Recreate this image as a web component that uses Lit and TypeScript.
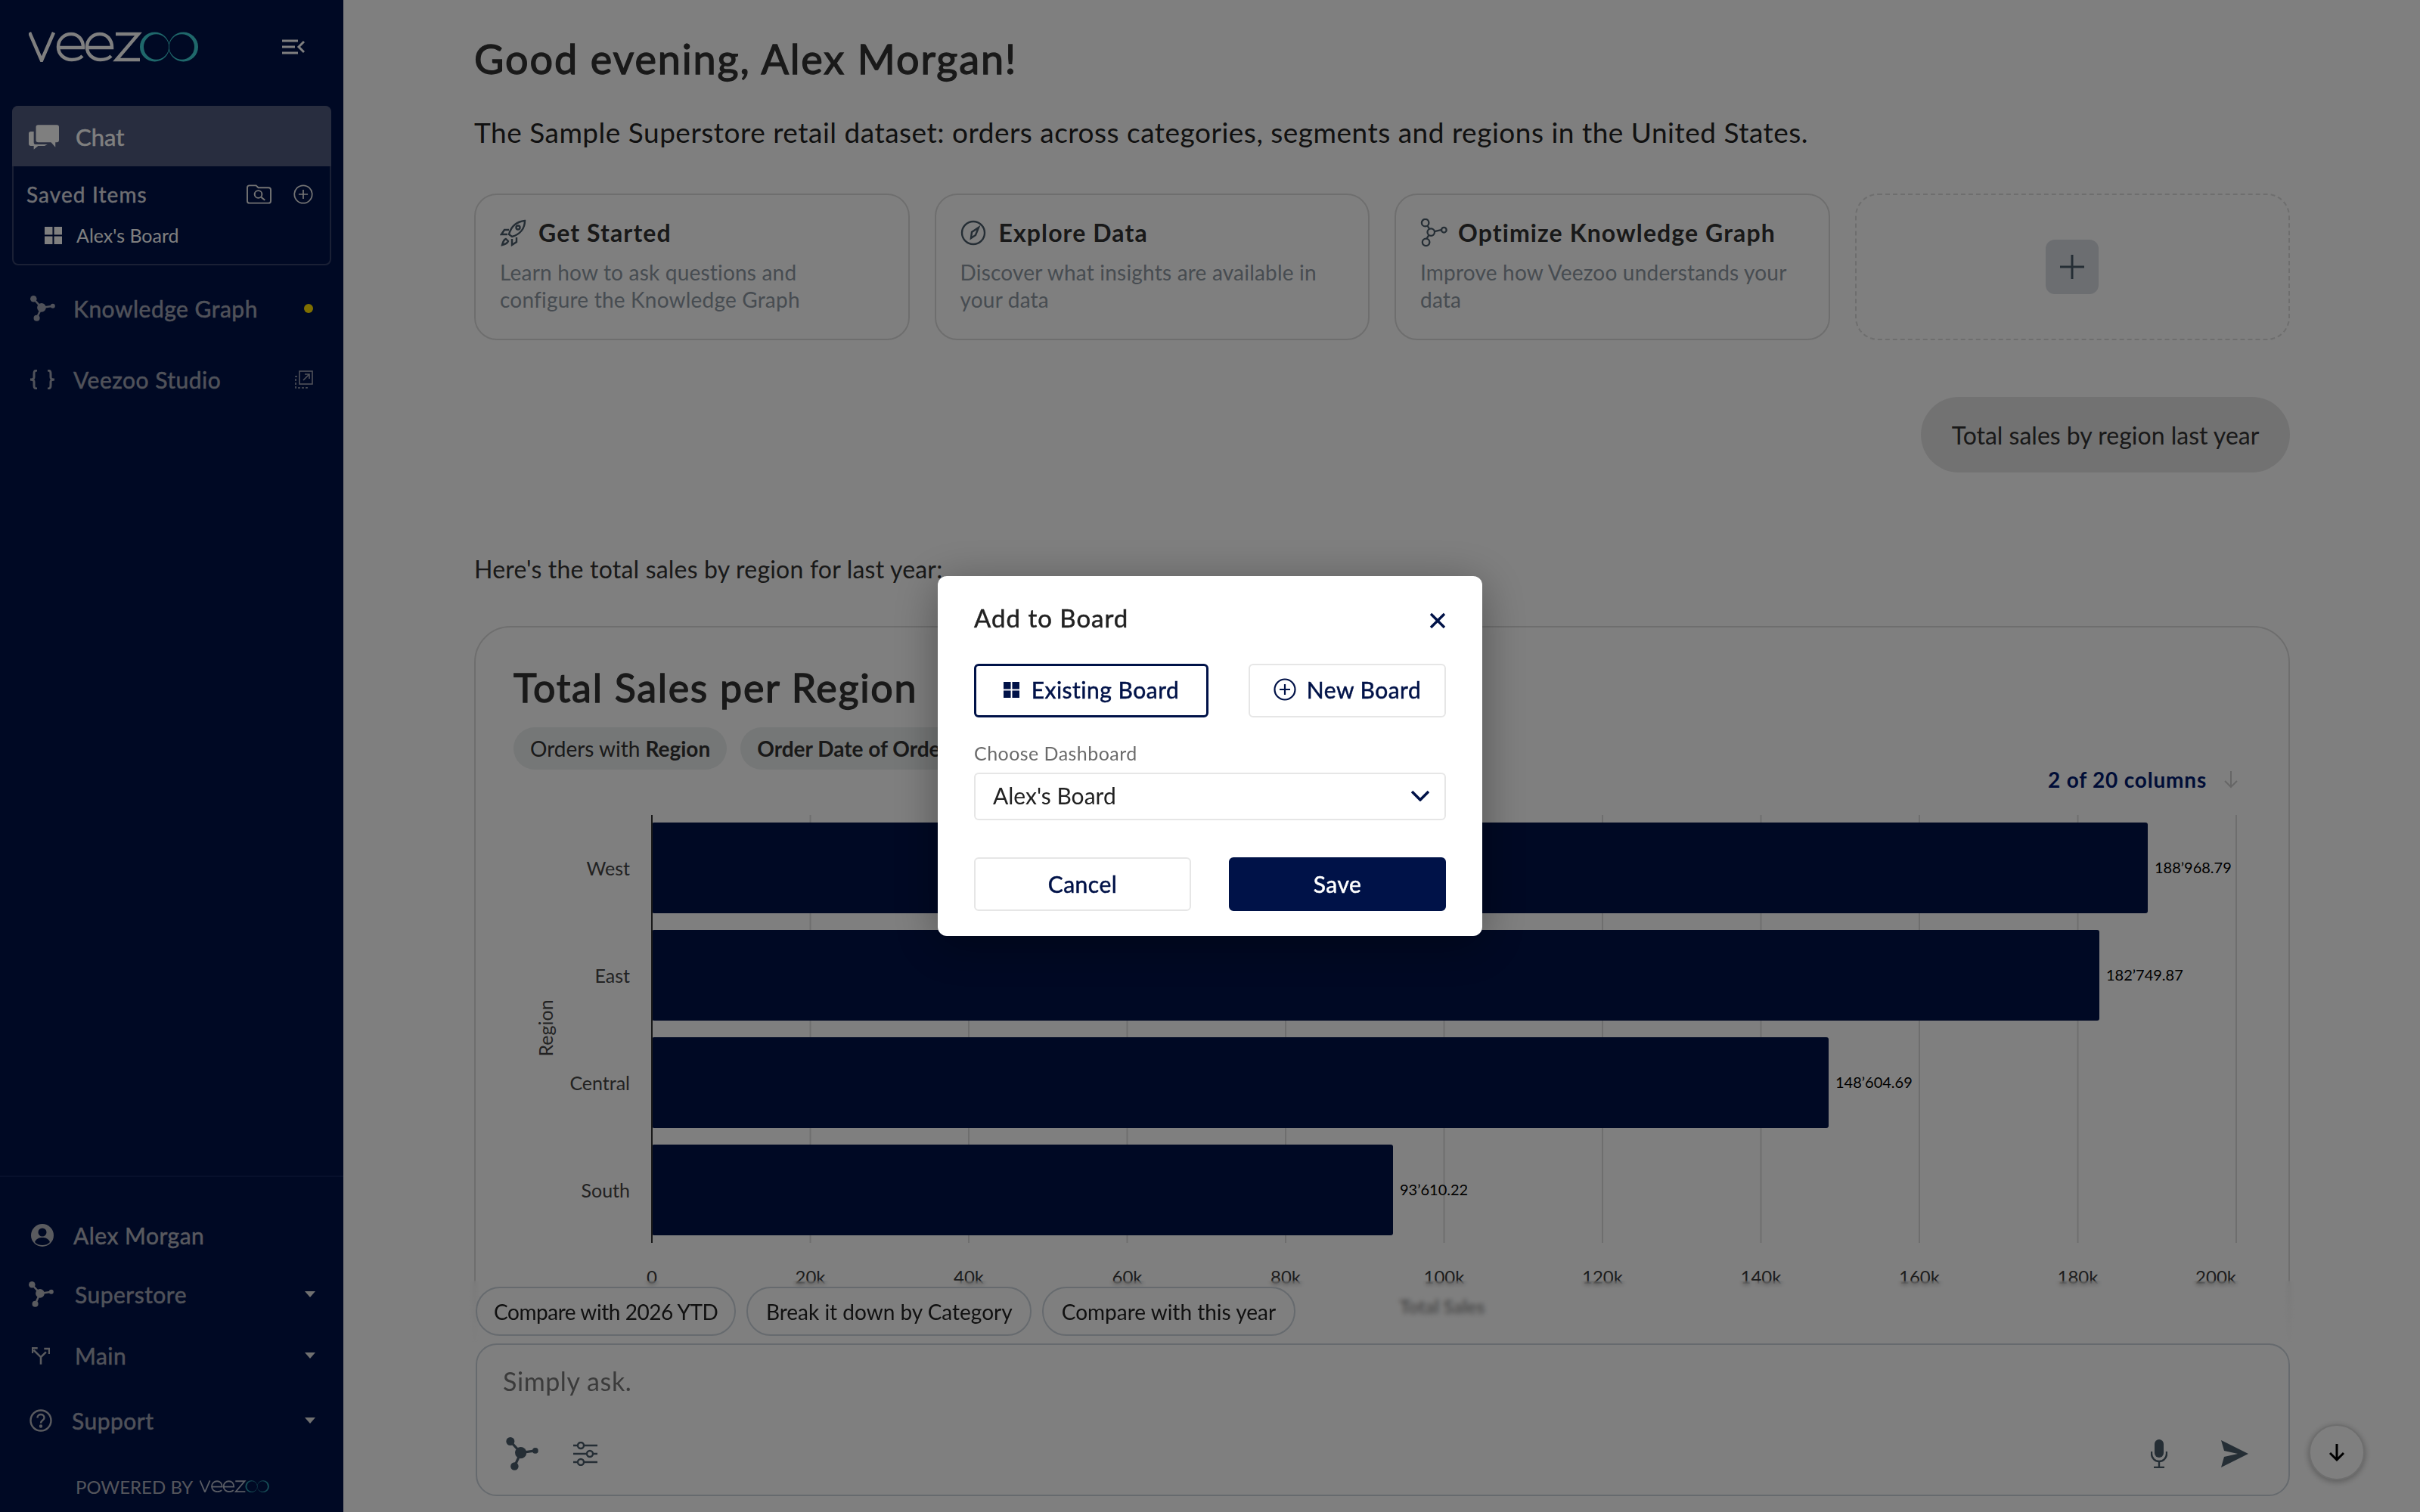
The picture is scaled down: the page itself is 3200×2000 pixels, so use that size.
import { LitElement, html, css, svg } from "lit";
import { customElement } from "lit/decorators.js";

const graphIcon = (s: number, c: string) => html`<svg width=${s} height=${s} viewBox="0 0 32 32" fill=${c} stroke=${c}>
  <line x1="5" y1="4" x2="15" y2="15" stroke-width="2.4"/><line x1="15" y1="15" x2="29" y2="13" stroke-width="2.4"/><line x1="15" y1="15" x2="9" y2="28" stroke-width="2.4"/>
  <circle cx="5" cy="4" r="4" stroke="none"/><circle cx="15" cy="15" r="5.5" stroke="none"/><circle cx="29" cy="13" r="2.8" stroke="none"/><circle cx="9" cy="28" r="3.8" stroke="none"/></svg>`;
const gridIcon = (s: number, c: string) => html`<svg width=${s} height=${s} viewBox="0 0 22 22" fill=${c}><rect x="0" y="0" width="10" height="10"/><rect x="12" y="0" width="10" height="10"/><rect x="0" y="12" width="10" height="10"/><rect x="12" y="12" width="10" height="10"/></svg>`;
const plusCircle = (s: number, c: string, w = 2) => html`<svg width=${s} height=${s} viewBox="0 0 30 30" fill="none" stroke=${c} stroke-width=${w}><circle cx="15" cy="15" r="13.5"/><path d="M15 8v14M8 15h14"/></svg>`;
const caret = html`<svg class="caret" width="14" height="8" viewBox="0 0 14 8" fill="#e0e0e0"><path d="M0 0h14L7 8z"/></svg>`;
const ring = (cx: number, icx: number) => `M${cx - 19.5} 20a19.500 19.500 0 1 0 39 0a19.500 19.500 0 1 0 -39 0zM${icx - 16.6} 20a16.600 16.700 0 1 0 33.200 0a16.600 16.700 0 1 0 -33.200 0z`;
const logo = (w: number, teal: string, mini = false) => html`<svg class=${mini ? "mini" : ""} width=${w} viewBox="0 0 224 40" fill="none">
  <g stroke="#fff" stroke-width="4.5"><path d="M1 1l16 37L33 1"/><path d="M39 21h33c0-11-7-18-16-18s-17 7-17 17 8 17 18 17c6 0 11-2 14-5"/><path d="M77 21h33c0-11-7-18-16-18s-17 7-17 17 8 17 18 17c6 0 11-2 14-5"/><path d="M115 3h30l-29 34h31"/></g>
  <path fill=${teal} fill-rule="evenodd" d=${ring(166.5, 168.6)}/><path fill=${teal} fill-rule="evenodd" d=${ring(204.5, 202.4)}/></svg>`;

const data = [
  { n: "West", v: "188’968.79", w: 1978 },
  { n: "East", v: "182’749.87", w: 1914 },
  { n: "Central", v: "148’604.69", w: 1556 },
  { n: "South", v: "93’610.22", w: 980 },
];
const ticks = ["0", "20k", "40k", "60k", "80k", "100k", "120k", "140k", "160k", "180k", "200k"];

@customElement("chart-view")
class ChartView extends LitElement {
  static styles = css`
    :host { display: block; }
    svg { display: block; font-family: Lato, sans-serif; }
    .cat { font-size: 25px; fill: #444; }
    .val { font-size: 20px; fill: #000; }
    .tick { font-size: 24px; fill: #3a3a3a; }
    .ttl { font-size: 24px; fill: #555; font-weight: 700; }
  `;
  render() {
    const x0 = 183, step = 209.5;
    return html`<svg width="2300" height="700" viewBox="0 0 2300 700">
      ${ticks.map((_, i) => svg`<line x1=${x0 + i * step} x2=${x0 + i * step} y1="0" y2="566" stroke="#ddd" stroke-width="2"/>`)}
      ${data.map((d, i) => svg`
        <rect x=${x0} y=${10 + i * 142} width=${d.w} height="120" rx="3" fill="#001248"/>
        <text class="cat" x="154" y=${80 + i * 142} text-anchor="end">${d.n}</text>
        <text class="val" x=${x0 + d.w + 9} y=${77 + i * 142}>${d.v}</text>`)}
      <line x1=${x0} x2=${x0} y1="0" y2="566" stroke="#333" stroke-width="2"/>
      ${ticks.map((t, i) => svg`<text class="tick" x=${x0 + i * step} y="620" text-anchor=${i === 10 ? "end" : "middle"}>${t}</text>`)}
      <text class="ttl" x="1228" y="660" text-anchor="middle">Total Sales</text>
      <text class="cat" transform="translate(52 282) rotate(-90)" text-anchor="middle">Region</text>
    </svg>`;
  }
}

@customElement("app-root")
class AppRoot extends LitElement {
  static styles = css`
    :host { display: block; height: 2000px; font-family: Lato, "Noto Sans", sans-serif; color: #222; }
    * { box-sizing: border-box; }
    .page { display: flex; height: 2000px; overflow: hidden; position: relative; background: #fff; }
    .side { width: 454px; flex: none; background: #001248; color: #fff; display: flex; flex-direction: column; padding: 42px 16px 11px; }
    .top { display: flex; justify-content: space-between; align-items: center; padding: 0 35px 0 22px; height: 40px; }
    .active { margin-top: 58px; border: 2px solid #34406a; border-radius: 8px; height: 211px; }
    .chat { height: 80px; margin: -2px -2px 0; background: #505a7e; border-radius: 8px 8px 0 0; display: flex; align-items: center; gap: 22px; padding: 2px 22px 0; font-size: 31px; font-weight: 400; -webkit-text-stroke: .5px #fff; color: #fff; }
    .saved { display: flex; align-items: center; padding: 0 22px 0 17px; height: 73px; font-size: 28px; letter-spacing: 1.1px; -webkit-text-stroke: .4px #dcdde2; color: #dcdde2; }
    .saved .lab { flex: 1; }
    .saved .pl { margin-left: 29px; display: flex; }
    .board { display: flex; align-items: center; gap: 19px; padding-left: 41px; font-size: 25px; color: #fff; height: 36px; }
    .nav { display: flex; align-items: center; height: 46px; padding: 0 24px 0 22px; font-size: 30px; letter-spacing: .5px; -webkit-text-stroke: .5px currentColor; color: #a1a5b4; }
    .nav span { flex: 1; }
    .ic { width: 36px; margin-right: 23px; display: flex; justify-content: center; flex: none; }
    .ic.l { transform: translateX(-2px); }
    .tx2 { margin-left: 2px; }
    .txm2 { margin-left: -2px; }
    .caret { margin-right: -3px; }
    .n1 { margin-top: 34px; }
    .n2 { margin-top: 48px; }
    .grow { flex: 1; }
    .div { height: 2px; background: #0f2159; margin: 0 -16px 54px; }
    .n3 { margin-bottom: 32px; color: #b0b2be; }
    .n4 { margin-bottom: 35px; }
    .n5 { margin-bottom: 40px; }
    .powered { margin: 41px 0 0 84px; height: 46px; display: flex; align-items: center; gap: 9px; font-size: 24px; color: #a8abb8; }
    .mini { opacity: .7; }
    .main { flex: 1; position: relative; overflow: hidden; padding: 0 172px 0 173px; }
    h1 { margin: 46px 0 0; font-size: 54px; letter-spacing: 1.85px; line-height: 64px; font-weight: 400; -webkit-text-stroke: 1.3px #333; color: #333; }
    .sub { margin: 42px 0 0; font-size: 37px; letter-spacing: .5px; line-height: 46px; color: #222; }
    .cards { display: grid; grid-template-columns: repeat(4, 1fr); gap: 33px; margin-top: 58px; height: 194px; }
    .card { border: 2px solid #ddd; border-radius: 30px; padding: 30px 32px 0; }
    .card h3 { margin: 0; display: flex; align-items: center; gap: 15px; font-size: 32px; letter-spacing: 1.1px; line-height: 40px; font-weight: 700; color: #333; }
    .card h3.g16 { gap: 17px; }
    .card h3.g12 { gap: 12px; }
    .card p { margin: 14px 0 0; font-size: 28px; letter-spacing: .2px; line-height: 36px; color: #8e98a3; }
    .add { border: 2px dashed #ddd; border-radius: 30px; display: flex; align-items: center; justify-content: center; }
    .addbtn { width: 70px; height: 72px; border-radius: 12px; background: #d8dce2; display: flex; align-items: center; justify-content: center; }
    .bubble { margin: 75px 0 0 auto; width: 488px; height: 100px; border-radius: 50px; background: #e5e5e5; display: flex; align-items: center; justify-content: center; font-size: 32px; color: #333; }
    .intro { margin: 108px 0 0; font-size: 32px; letter-spacing: .2px; line-height: 40px; color: #333; }
    .chartcard { margin-top: 55px; height: 1000px; border: 2px solid #ddd; border-radius: 48px; padding: 48px 50px 0; position: relative; }
    .ctitle { font-size: 52px; letter-spacing: 1.7px; line-height: 62px; font-weight: 400; -webkit-text-stroke: 1.3px #333; color: #333; margin: 0; }
    .chips { display: flex; gap: 18px; margin-top: 22px; }
    .chip { height: 56px; border-radius: 28px; background: #eaeeee; padding: 0 22px; display: flex; align-items: center; gap: 7px; font-size: 28px; color: #333; white-space: nowrap; }
    .cols { position: absolute; right: 66px; top: 184px; display: flex; align-items: center; gap: 22px; font-size: 28px; letter-spacing: .8px; font-weight: 700; color: #001a6e; }
    .chartwrap { margin: 60px 0 0 0; }
    .footer { position: absolute; left: 0; right: 0; bottom: 0; height: 306px; padding: 0 172px 21px 175px; display: flex; flex-direction: column; justify-content: flex-end; backdrop-filter: blur(3px); background: linear-gradient(to bottom, rgba(255,255,255,0.05), rgba(255,255,255,0.75) 25%, #fff 30%); }
    .sugg { display: flex; gap: 14px; margin-bottom: 10px; }
    .sg { height: 65px; border: 2px solid #ccd4dc; border-radius: 32px; padding: 0 23.5px; display: flex; align-items: center; font-size: 28px; color: #222; white-space: nowrap; }
    .sg.tight { letter-spacing: -.45px; padding: 0 22px; }
    .input { height: 202px; border: 2px solid #ccd4dc; border-radius: 28px; padding: 0 34px; display: flex; flex-direction: column; position: relative; }
    .ph { font-size: 34px; letter-spacing: .6px; color: #767676; margin-top: 28px; line-height: 40px; }
    .ctl { display: flex; align-items: center; margin-top: 54px; gap: 46px; padding-left: 3px; }
    .ctl .sp { flex: 1; }
    .send { margin: 0 18px 0 24px; }
    .down { position: absolute; right: 73px; bottom: 42px; width: 74px; height: 74px; border-radius: 50%; background: #fff; border: 2px solid #ddd; box-shadow: 0 2px 8px rgba(0,0,0,.3); display: flex; align-items: center; justify-content: center; }
    .overlay { position: fixed; inset: 0; background: rgba(0,0,0,.5); display: flex; align-items: center; justify-content: center; }
    .modal { width: 720px; height: 476px; background: #fff; border-radius: 12px; padding: 32px 48px 0; box-shadow: 0 10px 60px rgba(0,0,0,.35); }
    .mh { display: flex; justify-content: space-between; align-items: center; height: 46px; font-size: 33px; letter-spacing: 1px; -webkit-text-stroke: .5px #222; color: #222; }
    .x { margin-top: 8px; }
    .tabs { display: flex; justify-content: space-between; margin-top: 38px; }
    .btn { height: 71px; border: 2px solid #e6e6e6; border-radius: 6px; background: #fff; display: flex; align-items: center; justify-content: center; gap: 16px; padding: 0 0 3px; font-size: 30px; letter-spacing: .5px; font-weight: 400; -webkit-text-stroke: .5px currentColor; color: #001248; font-family: inherit; }
    .sel { width: 310px; border: 3px solid #001248; }
    .new { width: 261px; gap: 14px; }
    .lbl { margin-top: 32px; font-size: 25px; letter-spacing: .45px; line-height: 30px; color: #6b6b6b; }
    .select { margin-top: 11px; height: 63px; border: 2px solid #e6e6e6; border-radius: 6px; display: flex; align-items: center; justify-content: space-between; padding: 0 20px 3px 23px; font-size: 30px; color: #222; }
    .acts { display: flex; justify-content: space-between; margin-top: 49px; }
    .acts .btn { width: 287px; padding: 0 0 1px; }
    .save { background: #001248; border-color: #001248; color: #fff; }
  `;
  render() {
    const grey = "#4b5c6b";
    return html`<div class="page">
      <aside class="side">
        <div class="top">${logo(224, "#3fd0d6")}
          <svg width="30" height="20" viewBox="0 0 30 20" fill="none" stroke="#fff" stroke-width="3"><path d="M0 2h21M0 10h17M0 18h21M29 3l-7 7 7 7"/></svg></div>
        <div class="active">
          <div class="chat"><svg width="40" height="33" viewBox="0 0 42 34" fill="#fff"><path d="M10 3a3 3 0 0 1 3-3h26a3 3 0 0 1 3 3v18a3 3 0 0 1-3 3h-2v7l-6-7H13a3 3 0 0 1-3-3z"/><path d="M7 9v15a3 3 0 0 0 3 3h16l-4 2h-9l-6 5v-5H3a3 3 0 0 1-3-3V12a3 3 0 0 1 3-3z"/></svg>Chat</div>
          <div class="saved"><div class="lab">Saved Items</div>
            <svg width="33" height="26" viewBox="0 0 34 26" fill="none" stroke="#e8e8e8" stroke-width="2"><path d="M1 4a3 3 0 0 1 3-3h9l3 3h14a3 3 0 0 1 3 3v15a3 3 0 0 1-3 3H4a3 3 0 0 1-3-3z"/><circle cx="16" cy="13" r="5"/><path d="M20 17l5 4"/></svg>
            <div class="pl">${plusCircle(26, "#e8e8e8")}</div></div>
          <div class="board">${gridIcon(23, "#fff")}Alex's Board</div>
        </div>
        <div class="nav n1"><div class="ic">${graphIcon(34, "#a1a5b4")}</div><span>Knowledge Graph</span><svg width="12" height="12"><circle cx="6" cy="6" r="6" fill="#ffdf00"/></svg></div>
        <div class="nav n2"><div class="ic"><svg width="34" height="26" viewBox="0 0 34 26" fill="none" stroke="#a1a5b4" stroke-width="3"><path d="M10 1C6 1 6 3 6 6v4c0 2-1 3-5 3 4 0 5 1 5 3v4c0 3 0 5 4 5M24 1c4 0 4 2 4 5v4c0 2 1 3 5 3-4 0-5 1-5 3v4c0 3 0 5-4 5"/></svg></div><span>Veezoo Studio</span>
          <svg width="24" height="24" viewBox="0 0 24 24" fill="none" stroke="#a1a5b4" stroke-width="1.6"><rect x="6" y="1" width="17" height="17"/><path d="M11 13l8-8M13 5h6v6"/><path d="M3 8H1v15h15v-2" stroke-dasharray="3 2"/></svg></div>
        <div class="grow"></div>
        <div class="div"></div>
        <div class="nav n3"><div class="ic"><svg width="30" height="30" viewBox="0 0 30 30"><circle cx="15" cy="15" r="15" fill="#b5b7bf"/><circle cx="15" cy="11" r="5.5" fill="#001248"/><path d="M5 24c2-5 6-6 10-6s8 1 10 6c-3 3-6 4-10 4s-7-1-10-4z" fill="#001248"/></svg></div><span>Alex Morgan</span></div>
        <div class="nav n4"><div class="ic l">${graphIcon(34, "#b5b7bf")}</div><span class="tx2">Superstore</span>${caret}</div>
        <div class="nav n5"><div class="ic l"><svg width="24" height="25" viewBox="0 0 28 26" fill="none" stroke="#b5b7bf" stroke-width="3"><path d="M14 26V15L3 4M14 15l8-8M1 9V1h8M19 2h8v8"/></svg></div><span class="tx2">Main</span>${caret}</div>
        <div class="nav"><div class="ic l"><svg width="30" height="30" viewBox="0 0 30 30" fill="none" stroke="#b5b7bf" stroke-width="2.4"><circle cx="15" cy="15" r="13.5"/><path d="M10.5 11.5c0-6 9-6 9 0 0 3-4.500 3-4.500 7"/><circle cx="15" cy="22.500" r="1"/></svg></div><span class="txm2">Support</span>${caret}</div>
        <div class="powered">POWERED BY ${logo(92, "#3fd0d6", true)}</div>
      </aside>

      <main class="main">
        <h1>Good evening, Alex Morgan!</h1>
        <p class="sub">The Sample Superstore retail dataset: orders across categories, segments and regions in the United States.</p>
        <div class="cards">
          <div class="card"><h3><svg width="36" height="36" viewBox="0 0 36 36" fill="none" stroke=${grey} stroke-width="2.4"><path d="M12 20C15 9 23 3 33 2c0 10-6 18-17 21z"/><path d="M12 14H6l-4 6h8M22 24v6l-6 4v-8"/><path d="M8 26c-3 1-4 4-5 8 4-1 7-2 8-5z"/><circle cx="24" cy="11" r="2.500"/></svg>Get Started</h3><p>Learn how to ask questions and configure the Knowledge Graph</p></div>
          <div class="card"><h3 class="g16"><svg width="34" height="34" viewBox="0 0 34 34" fill="none" stroke=${grey} stroke-width="2.4"><circle cx="17" cy="17" r="15"/><path d="M24 10l-4 10-6 4 1-8z"/></svg>Explore Data</h3><p>Discover what insights are available in your data</p></div>
          <div class="card"><h3 class="g12"><svg width="38" height="38" viewBox="0 0 40 40" fill="none" stroke=${grey} stroke-width="2.4"><circle cx="7" cy="6" r="5"/><circle cx="15" cy="19" r="5"/><circle cx="8" cy="33" r="5"/><circle cx="33" cy="16" r="3.500"/><path d="M10 10l3 5M12 23l-3 5M20 18l9-2"/></svg>Optimize Knowledge Graph</h3><p>Improve how Veezoo understands your data</p></div>
          <div class="add"><div class="addbtn"><svg width="32" height="32" viewBox="0 0 32 32" stroke=${grey} stroke-width="3"><path d="M16 0v32M0 16h32"/></svg></div></div>
        </div>
        <div class="bubble">Total sales by region last year</div>
        <p class="intro">Here's the total sales by region for last year:</p>
        <section class="chartcard">
          <h2 class="ctitle">Total Sales per Region</h2>
          <div class="chips"><div class="chip"><span>Orders with</span><b>Region</b></div><div class="chip"><b>Order Date of Order is last year</b></div></div>
          <div class="cols">2 of 20 columns <svg width="20" height="24" viewBox="0 0 20 24" fill="none" stroke="#ccc" stroke-width="2"><path d="M10 1v21M2 14l8 8 8-8"/></svg></div>
          <div class="chartwrap"><chart-view></chart-view></div>
        </section>
        <div class="footer">
          <div class="sugg"><div class="sg tight">Compare with 2026 YTD</div><div class="sg">Break it down by Category</div><div class="sg">Compare with this year</div></div>
          <div class="input"><div class="ph">Simply ask.</div>
            <div class="ctl">${graphIcon(44, grey)}
              <svg width="32" height="32" viewBox="0 0 32 32" fill="none" stroke=${grey} stroke-width="2.4"><path d="M0 5h6M14 5h18M0 16h18M26 16h6M0 27h6M14 27h18"/><circle cx="10" cy="5" r="4"/><circle cx="22" cy="16" r="4"/><circle cx="10" cy="27" r="4"/></svg>
              <div class="sp"></div>
              <svg width="22" height="38" viewBox="0 0 22 38" fill=${grey}><rect x="5" y="0" width="12" height="24" rx="6"/><path d="M1 16v3a10 10 0 0 0 20 0v-3" fill="none" stroke=${grey} stroke-width="2.4"/><path d="M11 29v7M4 37h14" stroke=${grey} stroke-width="2.400"/></svg>
              <svg class="send" width="38" height="38" viewBox="0 0 38 38" fill=${grey}><path d="M1 1l36 18L1 37l4-14 18-4-18-4z"/></svg>
            </div></div>
        </div>
        <div class="down"><svg width="24" height="24" viewBox="0 0 24 24" fill="none" stroke="#000" stroke-width="3"><path d="M12 1v21M3 13l9 9 9-9"/></svg></div>
      </main>

      <div class="overlay">
        <div class="modal">
          <div class="mh">Add to Board <svg class="x" width="22" height="22" viewBox="0 0 22 22" stroke="#001248" stroke-width="3.4"><path d="M2 2l18 18M20 2L2 20"/></svg></div>
          <div class="tabs"><button class="btn sel">${gridIcon(21, "#001248")}Existing Board</button><button class="btn new">${plusCircle(30, "#001248", 2.2)}New Board</button></div>
          <div class="lbl">Choose Dashboard</div>
          <div class="select">Alex's Board <svg width="24" height="15" viewBox="0 0 24 15" fill="none" stroke="#001248" stroke-width="3.6"><path d="M1 2l11 11L23 2"/></svg></div>
          <div class="acts"><button class="btn">Cancel</button><button class="btn save">Save</button></div>
        </div>
      </div>
    </div>`;
  }
}
